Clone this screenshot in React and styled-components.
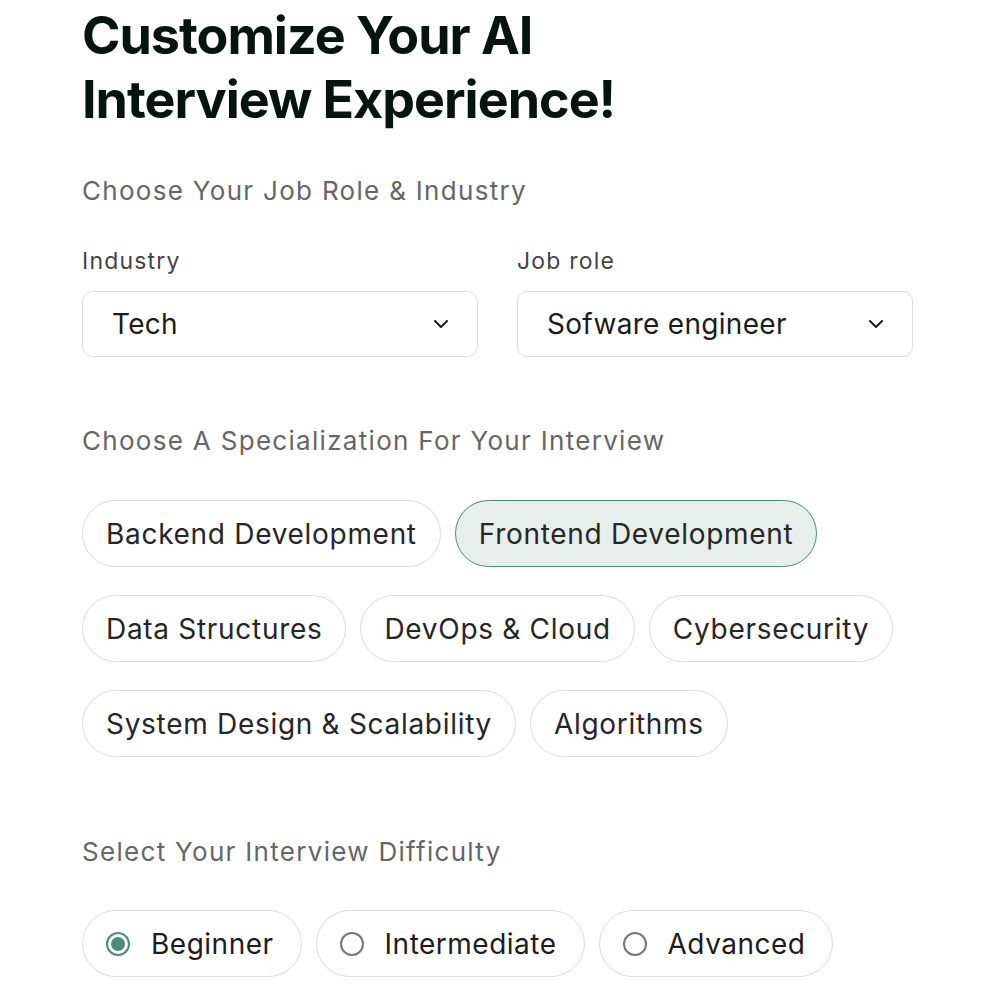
import React, { useState } from 'react'
import styled, { createGlobalStyle } from 'styled-components'

const GlobalStyle = createGlobalStyle`
	body {
		margin: 0;
		background: #ffffff;
		font-family: Inter, "Noto Sans", sans-serif;
	}
`

const Page = styled.div`
	padding: 4px 81px 0 82px;
	display: flex;
	flex-direction: column;
`

const Title = styled.h1`
	margin: 0;
	font-size: 52px;
	line-height: 64px;
	font-weight: 700;
	color: #06140f;
	letter-spacing: -1px;
`

const SectionTitle = styled.h2`
	margin: ${p => p.top || 0}px 0 0;
	font-size: 26px;
	line-height: 34px;
	font-weight: 400;
	color: #666666;
	letter-spacing: 1.3px;
`

const Fields = styled.div`
	display: grid;
	grid-template-columns: 396px 396px;
	gap: 39px;
	margin-top: 39px;
`

const Field = styled.div`
	display: flex;
	flex-direction: column;
	gap: 16px;
`

const Label = styled.span`
	font-size: 23px;
	line-height: 28px;
	color: #444444;
	letter-spacing: 1.2px;
`

const Select = styled.div`
	height: 66px;
	box-sizing: border-box;
	border: 1.5px solid #dddddd;
	border-radius: 10px;
	display: flex;
	align-items: center;
	justify-content: space-between;
	padding: 0 28px 0 29px;
	font-size: 28px;
	letter-spacing: 0.3px;
	color: #1c1c1c;
`

const Chips = styled.div`
	display: flex;
	flex-wrap: wrap;
	gap: 28px 14px;
	margin-top: 42px;
`

const Chip = styled.button`
	height: 67px;
	box-sizing: border-box;
	padding: 0 23px;
	border-radius: 34px;
	border: 1.5px solid ${p => (p.active ? '#4f8a78' : '#dcdcdc')};
	background: ${p => (p.active ? '#e7eeec' : '#ffffff')};
	font-family: Inter, "Noto Sans", sans-serif;
	font-size: 28px;
	letter-spacing: 0.7px;
	color: #262626;
	cursor: pointer;
`

const Radios = styled.div`
	display: flex;
	gap: 14px;
	margin-top: 41px;
`

const RadioPill = styled.label`
	height: 67px;
	box-sizing: border-box;
	padding: 0 27px 0 23px;
	border-radius: 34px;
	border: 1.5px solid #dcdcdc;
	display: flex;
	align-items: center;
	gap: 21px;
	font-size: 28px;
	letter-spacing: 0.5px;
	color: #1c1c1c;
	cursor: pointer;
`

const Dot = styled.span`
	width: 24px;
	height: 24px;
	box-sizing: border-box;
	border-radius: 50%;
	border: 2.5px solid ${p => (p.checked ? '#4f8a78' : '#777777')};
	display: grid;
	place-items: center;

	&::after {
		content: '';
		width: 14px;
		height: 14px;
		border-radius: 50%;
		background: ${p => (p.checked ? '#4f8a78' : 'transparent')};
	}
`

const Chevron = () => (
	<svg width="16" height="10" viewBox="0 0 16 10" fill="none">
		<path d="M2 2l6 6 6-6" stroke="#1c1c1c" strokeWidth="2" strokeLinecap="round" strokeLinejoin="round" />
	</svg>
)

const specs = [
	'Backend Development',
	'Frontend Development',
	'Data Structures',
	'DevOps & Cloud',
	'Cybersecurity',
	'System Design & Scalability',
	'Algorithms',
]

const levels = ['Beginner', 'Intermediate', 'Advanced']

export default function App() {
	const [spec, setSpec] = useState('Frontend Development')
	const [level, setLevel] = useState('Beginner')
	return (
		<Page>
			<GlobalStyle />
			<Title>
				Customize Your AI
				<br />
				Interview Experience!
			</Title>
			<SectionTitle top={42}>Choose Your Job Role &amp; Industry</SectionTitle>
			<Fields>
				<Field>
					<Label>Industry</Label>
					<Select>
						Tech
						<Chevron />
					</Select>
				</Field>
				<Field>
					<Label>Job role</Label>
					<Select>
						Sofware engineer
						<Chevron />
					</Select>
				</Field>
			</Fields>
			<SectionTitle top={67}>Choose A Specialization For Your Interview</SectionTitle>
			<Chips>
				{specs.map(s => (
					<Chip key={s} active={s === spec} onClick={() => setSpec(s)}>
						{s}
					</Chip>
				))}
			</Chips>
			<SectionTitle top={78}>Select Your Interview Difficulty</SectionTitle>
			<Radios>
				{levels.map(l => (
					<RadioPill key={l} onClick={() => setLevel(l)}>
						<Dot checked={l === level} />
						{l}
					</RadioPill>
				))}
			</Radios>
		</Page>
	)
}
